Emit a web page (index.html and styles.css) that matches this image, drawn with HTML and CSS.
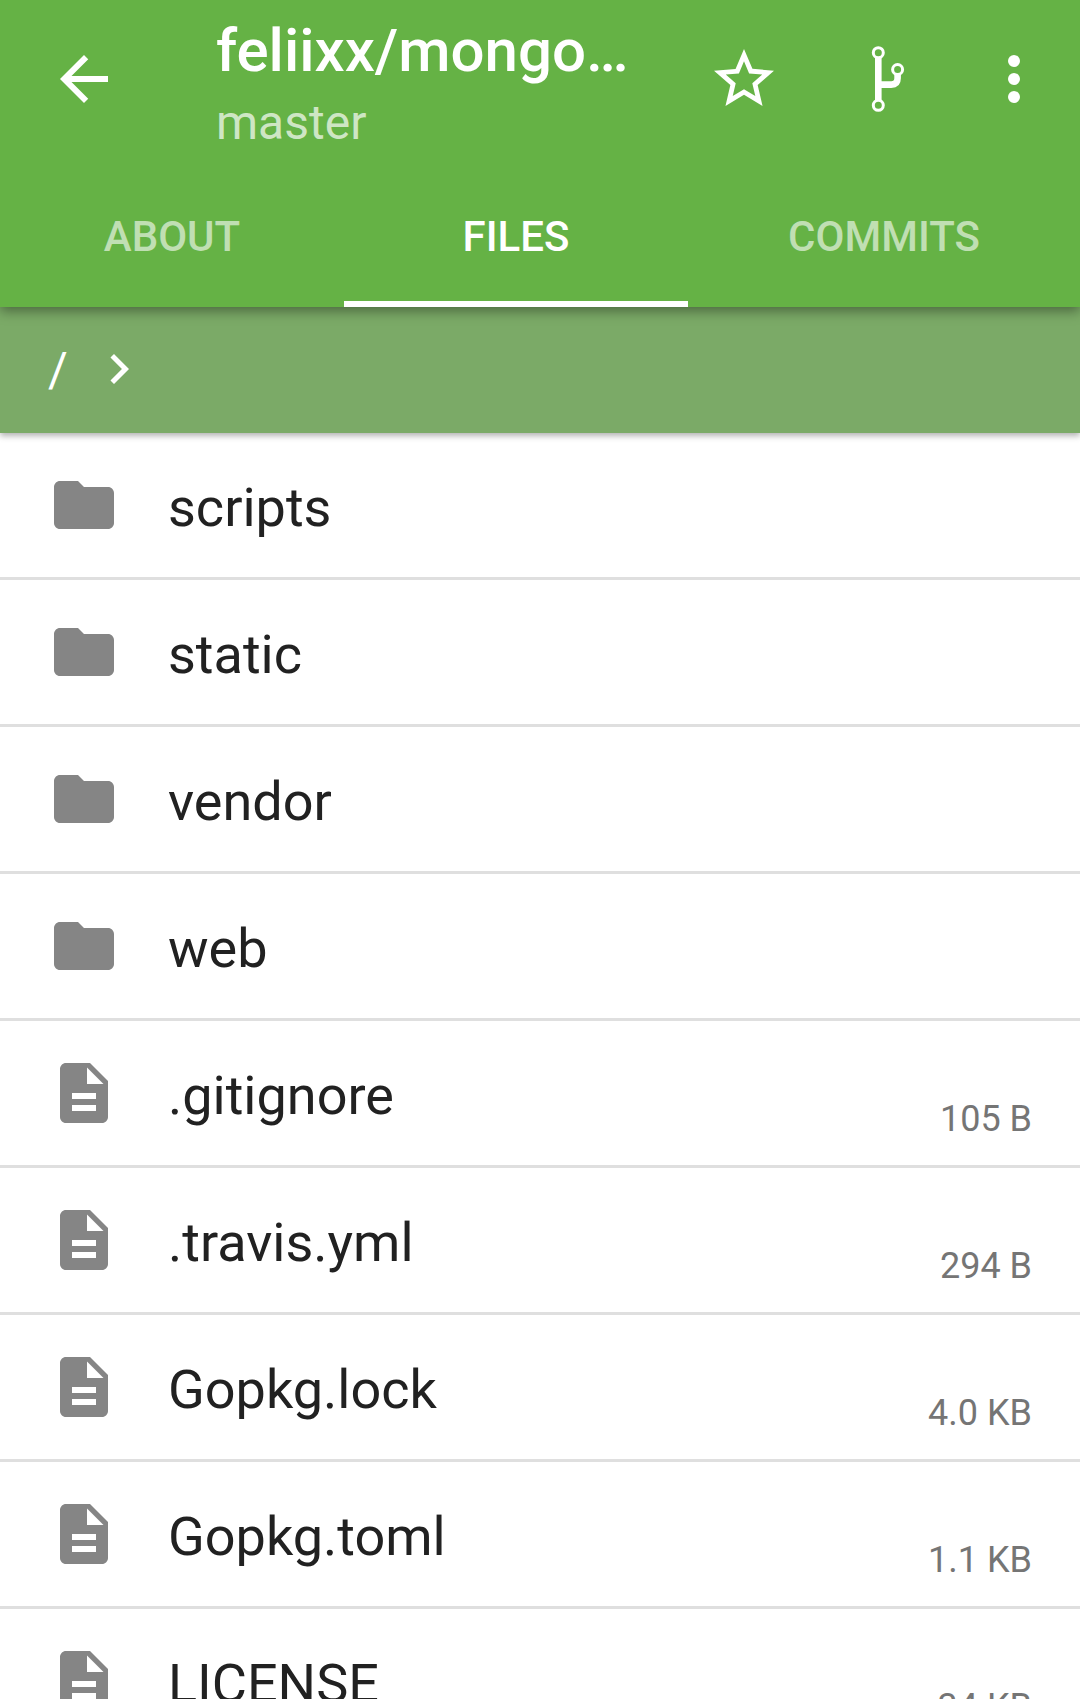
FILE: index.html
```html
<!DOCTYPE html>
<html lang="en">
<head>
<meta charset="utf-8">
<meta name="viewport" content="width=device-width, initial-scale=1">
<title>feliixx/mongo…</title>
<link rel="stylesheet" href="styles.css">
</head>
<body>
<svg class="sprite" aria-hidden="true">
  <symbol id="folder" viewBox="0 0 24 24"><path d="M10 4H4c-1.1 0-2 .9-2 2v12c0 1.1.9 2 2 2h16c1.1 0 2-.9 2-2V8c0-1.1-.9-2-2-2h-8z"/></symbol>
  <symbol id="file" viewBox="0 0 24 24"><path d="M14 2H6c-1.1 0-2 .9-2 2v16c0 1.1.9 2 2 2h12c1.1 0 2-.9 2-2V8zm2 16H8v-2h8zm0-4H8v-2h8zm-3-5V3.500L18.500 9z"/></symbol>
</svg>
<header class="appbar">
  <div class="toolbar">
    <button class="action back" type="button" aria-label="Back"><svg class="icon" viewBox="0 0 24 24"><path d="M20 11H7.830l5.590-5.590L12 4l-8 8 8 8 1.410-1.410L7.830 13H20z"/></svg></button>
    <div class="titles">
      <h1 class="title">feliixx/mongo…</h1>
      <p class="subtitle">master</p>
    </div>
    <button class="action" type="button" aria-label="Star"><svg class="icon" viewBox="0 0 24 24"><path d="M22 9.240l-7.190-.62L12 2 9.190 8.630 2 9.240l5.460 4.730L5.820 21 12 17.270 18.180 21l-1.630-7.030zM12 15.400l-3.760 2.270 1-4.280-3.320-2.880 4.380-.38L12 6.100l1.710 4.040 4.380.38-3.320 2.880 1 4.280z"/></svg></button>
    <button class="action" type="button" aria-label="Branches"><svg class="icon" viewBox="0 0 72 72"><g fill="none" stroke="#fff"><path d="M26.300 13v46M26.300 41.600h13q6.300 0 6.300-6.300v-5" stroke-width="6.600"/></g><g fill="#65b245" stroke="#fff" stroke-width="3"><circle cx="26.300" cy="9.700" r="5"/><circle cx="26.300" cy="62.300" r="5"/><circle cx="45.600" cy="26.500" r="5"/></g></svg></button>
    <button class="action more" type="button" aria-label="More options"><svg class="icon" viewBox="0 0 24 24"><circle cx="12" cy="6" r="2"/><circle cx="12" cy="12" r="2"/><circle cx="12" cy="18" r="2"/></svg></button>
  </div>
  <nav class="tabs">
    <a class="tab" href="#about">ABOUT</a>
    <a class="tab active" href="#files" aria-current="page">FILES</a>
    <a class="tab" href="#commits">COMMITS</a>
  </nav>
</header>
<nav class="breadcrumb" aria-label="Path">
  <a class="crumb" href="#root">/</a>
  <svg class="chevron" viewBox="0 0 24 24" aria-hidden="true"><path d="M10 6L8.590 7.410 13.170 12l-4.580 4.590L10 18l6-6z"/></svg>
</nav>
<main class="files">
  <a class="row" href="#scripts"><svg class="icon"><use href="#folder"/></svg><span class="name">scripts</span></a>
  <a class="row" href="#static"><svg class="icon"><use href="#folder"/></svg><span class="name">static</span></a>
  <a class="row" href="#vendor"><svg class="icon"><use href="#folder"/></svg><span class="name">vendor</span></a>
  <a class="row" href="#web"><svg class="icon"><use href="#folder"/></svg><span class="name">web</span></a>
  <a class="row" href="#gitignore"><svg class="icon"><use href="#file"/></svg><span class="name">.gitignore</span><span class="size">105 B</span></a>
  <a class="row" href="#travis"><svg class="icon"><use href="#file"/></svg><span class="name">.travis.yml</span><span class="size">294 B</span></a>
  <a class="row" href="#lock"><svg class="icon"><use href="#file"/></svg><span class="name">Gopkg.lock</span><span class="size">4.0 KB</span></a>
  <a class="row" href="#toml"><svg class="icon"><use href="#file"/></svg><span class="name">Gopkg.toml</span><span class="size">1.1 KB</span></a>
  <a class="row" href="#license"><svg class="icon"><use href="#file"/></svg><span class="name">LICENSE</span><span class="size">34 KB</span></a>
</main>
</body>
</html>
```
FILE: styles.css
```css
* { box-sizing: border-box; }

body {
  margin: 0;
  height: 100vh;
  overflow: hidden;
  display: flex;
  flex-direction: column;
  background: #fff;
  color: #212121;
  font-family: Roboto, sans-serif;
}

a { color: inherit; text-decoration: none; }

.sprite { display: none; }

.icon {
  display: block;
  flex: none;
  width: 72px;
  height: 72px;
  fill: currentColor;
}

.appbar {
  flex: none;
  z-index: 2;
  background: #65b245;
  color: #fff;
  box-shadow: 0 4px 12px rgba(0, 0, 0, 0.4);
}

.toolbar {
  display: flex;
  align-items: center;
  height: 163px;
  padding-bottom: 5px;
}

.action {
  flex: none;
  display: flex;
  justify-content: center;
  width: 144px;
  padding: 0;
  border: 0;
  background: none;
  color: inherit;
}

.back { width: 168px; }

.more { width: 120px; padding-right: 12px; }

.titles { flex: 1; min-width: 0; padding: 16px 0 0 48px; }

.title {
  margin: 0;
  overflow: hidden;
  white-space: nowrap;
  font-size: 60px;
  font-weight: 500;
  line-height: 72px;
}

.subtitle {
  margin: 0;
  color: rgba(255, 255, 255, 0.7);
  font-size: 48px;
  line-height: 72px;
}

.tabs {
  display: grid;
  grid-template-columns: 344fr 344fr 392fr;
  height: 144px;
}

.tab {
  display: flex;
  align-items: center;
  justify-content: center;
  padding-top: 8px;
  border-bottom: 6px solid transparent;
  color: rgba(255, 255, 255, 0.6);
  font-size: 42px;
  font-weight: 500;
}

.tab.active { border-bottom-color: #fff; color: #fff; }

.breadcrumb {
  flex: none;
  z-index: 1;
  display: flex;
  align-items: center;
  gap: 21px;
  height: 126px;
  padding: 0 48px 2px;
  background: #7baa67;
  color: #fff;
  font-size: 48px;
  line-height: 60px;
  box-shadow: 0 3px 6px rgba(0, 0, 0, 0.3);
}

.crumb { padding-top: 2px; }

.chevron { width: 60px; height: 60px; fill: currentColor; }

.files { flex: 1; min-height: 0; overflow: hidden; }

.row {
  display: flex;
  align-items: center;
  height: 147px;
  padding: 0 48px;
  border-bottom: 3px solid #dfdfdf;
}

.row .icon { color: #858585; }

.name {
  flex: 1;
  padding: 6px 0 0 48px;
  font-size: 54px;
  line-height: 64px;
}

.size {
  align-self: flex-end;
  padding-bottom: 25px;
  color: #757575;
  font-size: 36px;
  line-height: 42px;
}
```
